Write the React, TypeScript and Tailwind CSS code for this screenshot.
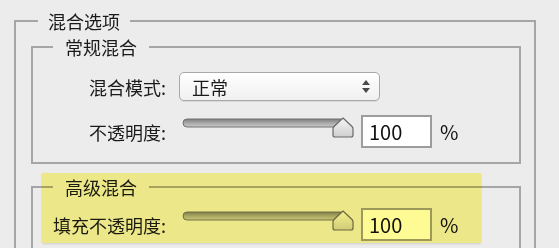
import React from 'react';

const font = { fontFamily: '"Noto Sans CJK SC", "Noto Sans", sans-serif' };

function Slider() {
  return (
    <svg width="178" height="24" viewBox="0 0 178 24" className="self-start mt-[1px]">
      <defs>
        <linearGradient id="trk" x1="0" y1="0" x2="0" y2="1">
          <stop offset="0" stopColor="#7d7d7d" />
          <stop offset="0.5" stopColor="#a9a9a9" />
          <stop offset="1" stopColor="#c9c9c9" />
        </linearGradient>
        <linearGradient id="thm" x1="0" y1="0" x2="0" y2="1">
          <stop offset="0" stopColor="#f6f6f6" />
          <stop offset="1" stopColor="#cfcfcf" />
        </linearGradient>
      </defs>
      <rect x="4" y="3" width="162" height="8" rx="4" fill="url(#trk)" stroke="#727272" strokeWidth="1" />
      <path
        d="M164 2 L173 10.5 Q174 11.5 174 13 L174 19 Q174 21 172 21 L156 21 Q154 21 154 19 L154 13 Q154 11.5 155 10.5 Z"
        fill="url(#thm)"
        stroke="#6a6a6a"
        strokeWidth="1.2"
      />
    </svg>
  );
}

function NumberBox() {
  return (
    <div className="flex items-center gap-[8px]">
      <div className="w-[71px] h-[33px] border-2 border-[#9c9c9c] bg-white flex items-center pl-[6px] text-[20px] text-[#111]">
        100
      </div>
      <span className="text-[20px] text-[#111]">%</span>
    </div>
  );
}

function Label({ children }: { children: React.ReactNode }) {
  return (
    <div className="w-[133px] text-right text-[18px] leading-[22px] text-[#1a1a1a] shrink-0">
      {children}
    </div>
  );
}

export default function App() {
  return (
    <div
      className="relative w-[559px] h-[248px] overflow-hidden bg-[#ececec] pt-[10px] pl-[14px]"
      style={font}
    >
      <fieldset className="w-[522px] border-2 border-[#a6a6a6] pl-[15px] pr-[13px] pb-[30px]">
        <legend className="ml-[7px] px-[10px] text-[18px] leading-[22px] text-[#1a1a1a]">
          混合选项
        </legend>

        {/* 常规混合 */}
        <fieldset className="mt-[4px] border-2 border-[#a6a6a6] pb-[14px]">
          <legend className="ml-[20px] px-[12px] text-[18px] leading-[22px] text-[#1a1a1a]">
            常规混合
          </legend>
          <div className="flex flex-col gap-[14px] mt-[14px]">
            <div className="flex items-center h-[29px]">
              <Label>混合模式:</Label>
              <div className="ml-[13px] w-[201px] h-[29px] rounded-[5px] border border-[#a9a9a9] bg-gradient-to-b from-white to-[#f0f0f0] flex items-center justify-between pl-[12px] pr-[9px] shadow-[0_1px_0_#d9d9d9]">
                <span className="text-[18px] leading-[22px] text-[#1a1a1a]">正常</span>
                <svg width="8" height="13" viewBox="0 0 8 13">
                  <path d="M0 5 L4 0 L8 5 Z" fill="#4a4a4a" />
                  <path d="M0 8 L4 13 L8 8 Z" fill="#4a4a4a" />
                </svg>
              </div>
            </div>
            <div className="flex items-center h-[33px]">
              <Label>不透明度:</Label>
              <div className="ml-[13px] flex items-center h-[33px] gap-[4px]">
                <Slider />
                <NumberBox />
              </div>
            </div>
          </div>
        </fieldset>

        {/* 高级混合 */}
        <fieldset className="mt-[12px] border-2 border-[#a6a6a6] pb-[30px]">
          <legend className="ml-[20px] px-[12px] text-[18px] leading-[22px] text-[#1a1a1a]">
            高级混合
          </legend>
          <div className="flex items-center h-[33px] mt-[10px]">
            <Label>填充不透明度:</Label>
            <div className="ml-[13px] flex items-center h-[33px] gap-[4px]">
              <Slider />
              <NumberBox />
            </div>
          </div>
        </fieldset>
      </fieldset>

      {/* highlight marker */}
      <div className="absolute left-[42px] top-[173px] w-[439px] h-[70px] bg-[#fffb94] mix-blend-multiply shadow-[0_1px_2px_rgba(0,0,0,0.12)]" />
    </div>
  );
}
